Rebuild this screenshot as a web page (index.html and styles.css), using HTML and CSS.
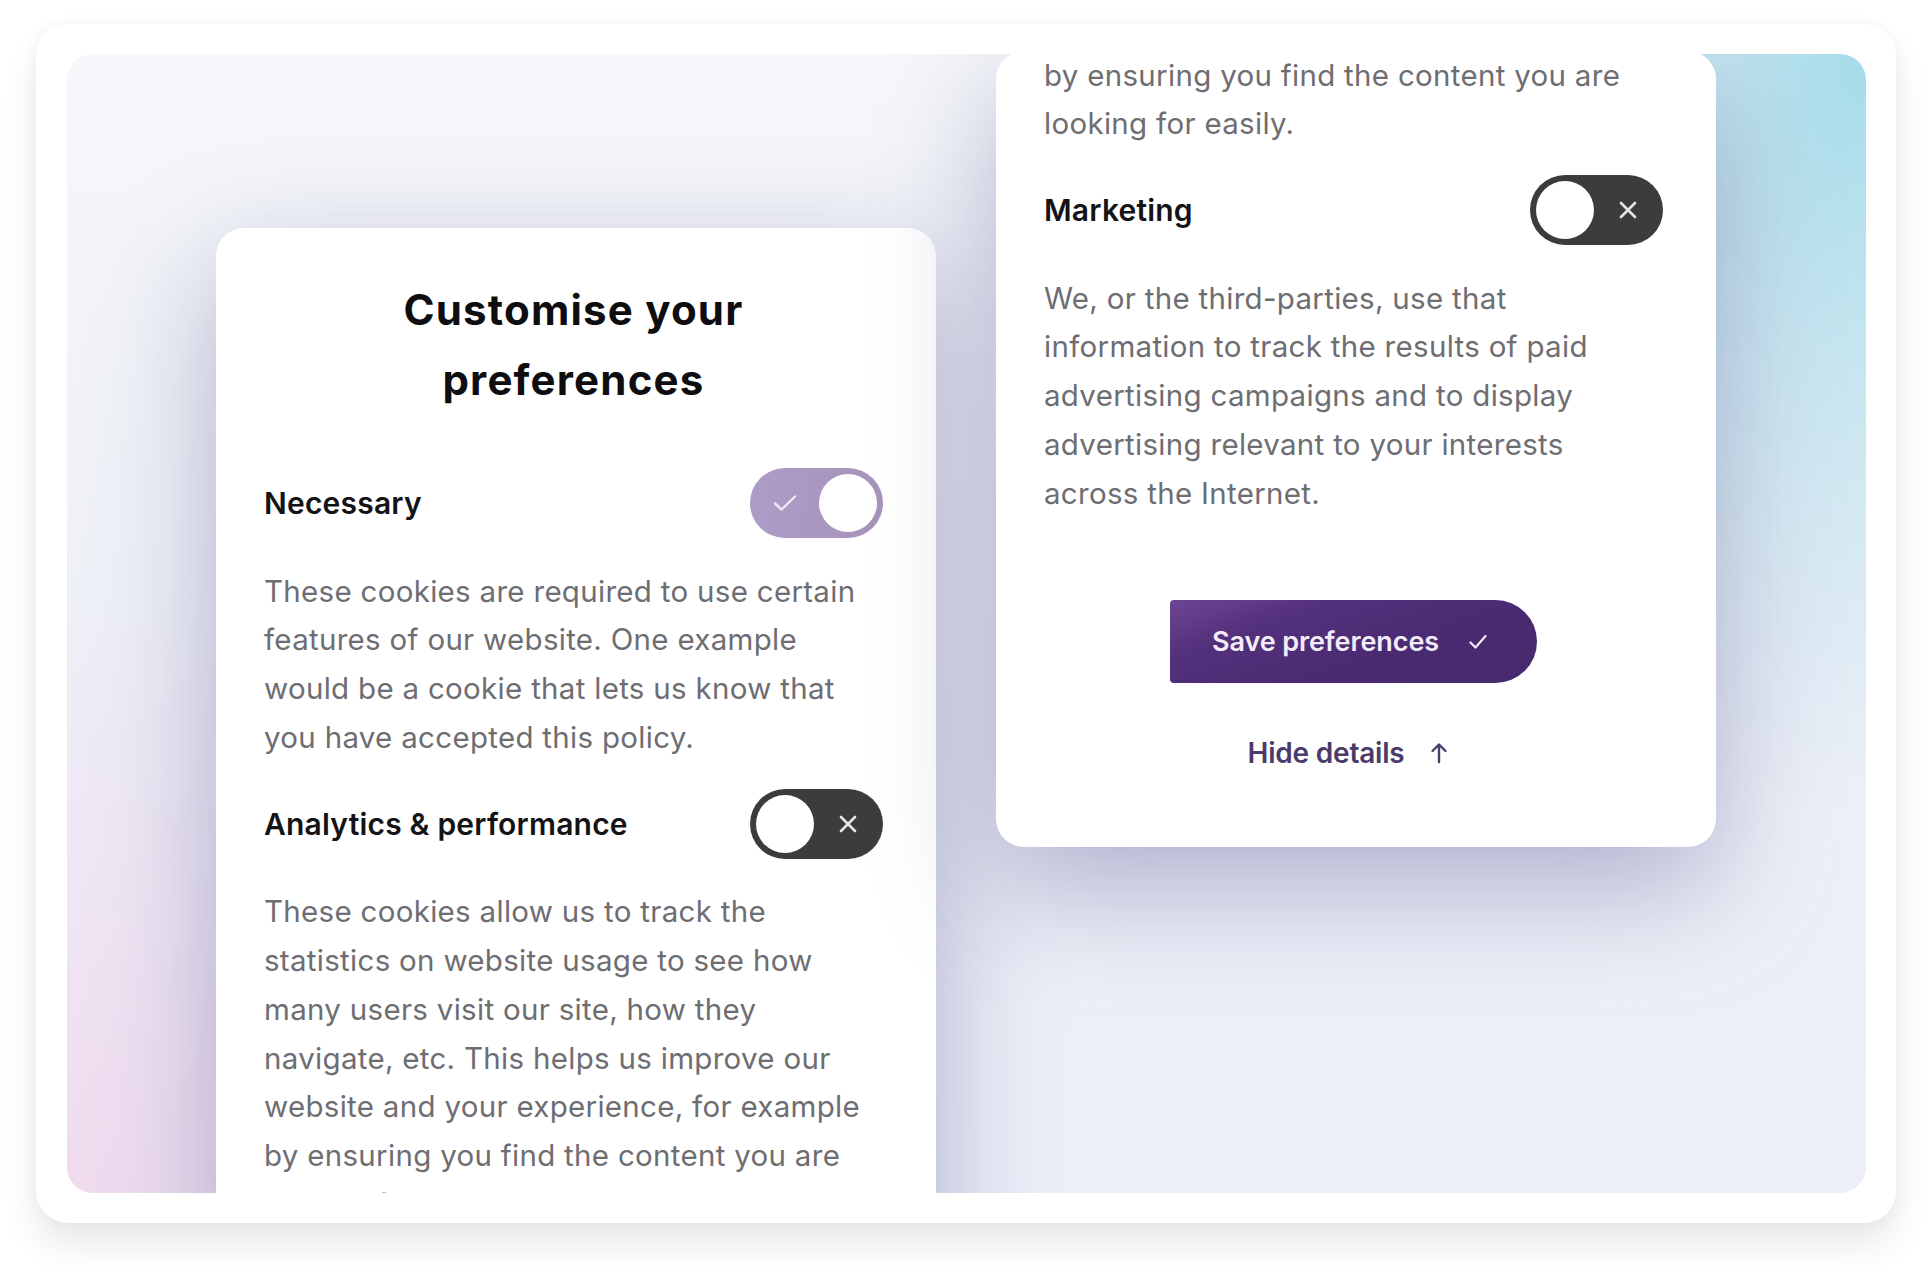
FILE: index.html
```html
<!DOCTYPE html>
<html lang="en">
<head>
<meta charset="utf-8">
<title>Customise your preferences</title>
<link rel="stylesheet" href="styles.css">
</head>
<body>
<div class="frame">
  <div class="panel">
    <div class="card card-left">
      <h1 class="title">Customise your<br>preferences</h1>
      <div class="section first">
        <div class="row">
          <span class="label">Necessary</span>
          <span class="toggle on">
            <svg class="tick" width="24" height="18" viewBox="0 0 24 18"><path d="M2 9.5 L8.5 15.5 L22 2.5" fill="none" stroke="#efe8f5" stroke-width="2.4" stroke-linecap="round" stroke-linejoin="round"/></svg>
            <span class="knob"></span>
          </span>
        </div>
        <p class="desc">These cookies are required to use certain<br>features of our website. One example<br>would be a cookie that lets us know that<br>you have accepted this policy.</p>
      </div>
      <div class="section">
        <div class="row">
          <span class="label">Analytics &amp; performance</span>
          <span class="toggle off">
            <span class="knob"></span>
            <svg class="cross" width="18" height="18" viewBox="0 0 18 18"><path d="M2 2 L16 16 M16 2 L2 16" fill="none" stroke="#e6e6e6" stroke-width="2.6" stroke-linecap="round"/></svg>
          </span>
        </div>
        <p class="desc">These cookies allow us to track the<br>statistics on website usage to see how<br>many users visit our site, how they<br>navigate, etc. This helps us improve our<br>website and your experience, for example<br>by ensuring you find the content you are<br>looking for easily.</p>
      </div>
    </div>
    <div class="card card-right">
      <p class="desc top">by ensuring you find the content you are<br>looking for easily.</p>
      <div class="section">
        <div class="row">
          <span class="label">Marketing</span>
          <span class="toggle off">
            <span class="knob"></span>
            <svg class="cross" width="18" height="18" viewBox="0 0 18 18"><path d="M2 2 L16 16 M16 2 L2 16" fill="none" stroke="#e6e6e6" stroke-width="2.6" stroke-linecap="round"/></svg>
          </span>
        </div>
        <p class="desc">We, or the third-parties, use that<br>information to track the results of paid<br>advertising campaigns and to display<br>advertising relevant to your interests<br>across the Internet.</p>
      </div>
      <button class="save" type="button">
        <span>Save preferences</span>
        <svg width="18" height="16" viewBox="0 0 18 16"><path d="M1.5 8.5 L6.5 13.5 L16.5 2" fill="none" stroke="#f3ecf7" stroke-width="2.2" stroke-linecap="round" stroke-linejoin="round"/></svg>
      </button>
      <a class="hide" href="#">
        <span>Hide details</span>
        <svg width="18" height="22" viewBox="0 0 18 22"><path d="M9 20 L9 3 M2.5 9 L9 2.5 L15.5 9" fill="none" stroke="#4b3b6b" stroke-width="2.4" stroke-linecap="round" stroke-linejoin="round"/></svg>
      </a>
    </div>
  </div>
</div>
</body>
</html>
```

FILE: styles.css
```css
* { box-sizing: border-box; }

html, body {
  margin: 0;
  padding: 0;
  background: #ffffff;
}

body {
  font-family: "Inter", "Liberation Sans", sans-serif;
  width: 1932px;
  height: 1272px;
  overflow: hidden;
}

.frame {
  margin: 24px 0 0 36px;
  width: 1860px;
  height: 1199px;
  padding: 30px 30px 30px 31px;
  background: #ffffff;
  border-radius: 32px;
  box-shadow: 0 22px 36px rgba(0, 0, 0, 0.09), 0 0 16px rgba(0, 0, 0, 0.04);
}

.panel {
  width: 1799px;
  height: 1139px;
  border-radius: 26px;
  overflow: hidden;
  display: flex;
  align-items: flex-start;
  gap: 60px;
  padding-left: 149px;
  background:
    radial-gradient(ellipse 420px 760px at 100% 0%, rgba(160, 218, 232, 0.95) 0%, rgba(170, 220, 234, 0.55) 45%, rgba(200, 230, 240, 0) 100%),
    radial-gradient(ellipse 520px 600px at 0% 100%, rgba(240, 218, 238, 1) 0%, rgba(240, 222, 240, 0.6) 45%, rgba(240, 230, 245, 0) 100%),
    linear-gradient(180deg, #f5f7fa 0%, #eef0f7 50%, #eceef8 100%);
}

.card {
  flex: 0 0 720px;
  width: 720px;
  background: #ffffff;
  border-radius: 28px;
  padding: 0 53px 0 48px;
  box-shadow: 0 40px 120px rgba(80, 80, 140, 0.4);
}

.card-left {
  margin-top: 174px;
  padding-top: 47px;
  padding-bottom: 60px;
}

.card-right {
  margin-top: -3.5px;
  padding-bottom: 69.5px;
  display: flex;
  flex-direction: column;
}

.title {
  margin: 0;
  font-size: 42px;
  line-height: 70px;
  font-weight: 700;
  color: #0e0e10;
  text-align: center;
  letter-spacing: 1.2px;
}

.section { margin-top: 27px; }
.section.first { margin-top: 53px; }

.row {
  display: flex;
  align-items: center;
  justify-content: space-between;
  height: 70px;
}

.label {
  font-size: 30px;
  font-weight: 600;
  color: #141416;
  letter-spacing: 0.2px;
}

.desc {
  margin: 28.5px 0 0 0;
  font-size: 29.5px;
  line-height: 48.8px;
  color: #6d6d72;
  letter-spacing: 0.3px;
  white-space: nowrap;
}

.desc.top { margin-top: 0; }

.toggle {
  position: relative;
  width: 133px;
  height: 70px;
  border-radius: 35px;
  display: flex;
  align-items: center;
  flex: 0 0 auto;
}

.toggle.on {
  background: linear-gradient(100deg, #ad9dc6 0%, #a592ba 100%);
  padding: 0 6px 0 23px;
  justify-content: space-between;
}

.toggle.off {
  background: #3c3c3e;
  padding: 0 26px 0 6px;
  justify-content: space-between;
}

.knob {
  width: 58px;
  height: 58px;
  border-radius: 50%;
  background: #ffffff;
}

.save {
  align-self: center;
  margin-top: 82.5px;
  width: 367px;
  height: 83px;
  border: 0;
  border-radius: 4px 42px 42px 4px;
  background: linear-gradient(160deg, #6d4692 0%, #53307c 28%, #4a2a72 60%, #472a6d 100%);
  color: #f3ecf7;
  font-family: inherit;
  font-size: 27px;
  font-weight: 600;
  letter-spacing: -0.1px;
  display: flex;
  align-items: center;
  gap: 30px;
  padding: 0 0 0 42px;
}

.hide {
  align-self: center;
  margin-top: 45.5px;
  margin-right: 12px;
  line-height: 49px;
  font-size: 28px;
  font-weight: 600;
  color: #4b3b6b;
  text-decoration: none;
  letter-spacing: -0.2px;
  display: flex;
  align-items: center;
  gap: 25px;
}
```
